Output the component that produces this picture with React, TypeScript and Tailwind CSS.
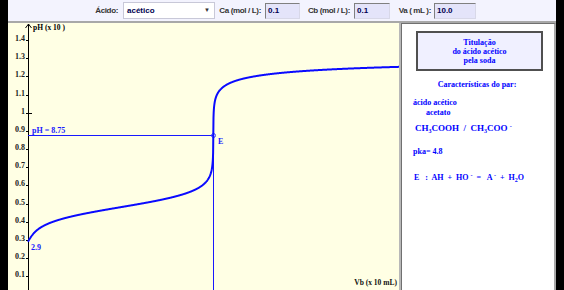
import React from "react";

// paramètres du titrage
const Ca = 0.1;
const Cb = 0.1;
const Va = 10;
const Ka = Math.pow(10, -4.8);
const Kw = 1e-14;

const phOf = (vb: number): number => {
  const V = Va + vb;
  const Ct = (Ca * Va) / V;
  const Na = (Cb * vb) / V;
  let lo = 0;
  let hi = 14;
  for (let i = 0; i < 60; i++) {
    const mid = (lo + hi) / 2;
    const h = Math.pow(10, -mid);
    const f = h + Na - Kw / h - (Ct * Ka) / (Ka + h);
    if (f > 0) lo = mid;
    else hi = mid;
  }
  return (lo + hi) / 2;
};

// coordonnées de la page
const X0 = 28;
const sx = (vb: number) => X0 + vb * 18.53;
const sy = (v: number) => 294.4 - 181.7 * v;

const buildCurve = () => {
  const pts: string[] = [];
  for (let vb = 0; vb <= 20.4; vb += 0.01) {
    pts.push(`${sx(vb).toFixed(2)},${sy(phOf(vb) / 10).toFixed(2)}`);
  }
  return pts.join(" ");
};

const ticks = [0.1, 0.2, 0.3, 0.4, 0.5, 0.6, 0.7, 0.8, 0.9, 1, 1.1, 1.2, 1.3, 1.4];

const Chart = () => {
  const curve = buildCurve();
  const yE = sy(0.875);
  const xE = sx(10);
  return (
    <div className="w-[391px] h-[267px] bg-[#ffffe4] overflow-hidden">
      <svg width={391} height={267} className="block">
        <g transform="translate(-8,-23)" fontFamily="'Liberation Serif', serif" fontWeight="bold">
          {/* axe vertical */}
          <line x1={28.5} y1={24} x2={28.5} y2={290} stroke="#000" strokeWidth={1} />
          <polyline points="25.5,28 28.5,24 31.5,28" fill="none" stroke="#000" strokeWidth={1} />
          <text x={33} y={30} fontSize={7.5} fill="#000">pH (x 10 )</text>
          {ticks.map((t) => {
            const y = Math.round(sy(t)) + 0.5;
            return (
              <g key={t}>
                <line x1={26} y1={y} x2={t === 1 ? 32 : 28} y2={y} stroke="#000" strokeWidth={1} />
                <text x={25} y={y} fontSize={8} textAnchor="end" fill="#222">
                  {t === 1 ? "1" : t.toFixed(1)}
                </text>
              </g>
            );
          })}

          {/* point d'équivalence */}
          <line x1={28} y1={Math.round(yE) + 0.5} x2={xE} y2={Math.round(yE) + 0.5} stroke="#1818ff" strokeWidth={1} />
          <line x1={Math.round(xE) + 0.5} y1={yE} x2={Math.round(xE) + 0.5} y2={291} stroke="#1818ff" strokeWidth={1} />
          <text x={32} y={133} fontSize={8} fill="#1818ff">pH = 8.75</text>
          <circle cx={Math.round(xE) + 0.5} cy={Math.round(yE) + 0.5} r={2} fill="none" stroke="#4040ff" strokeWidth={1} />
          <text x={218} y={144} fontSize={8} fill="#1818ff">E</text>

          {/* courbe */}
          <polyline points={curve} fill="none" stroke="#0a0aff" strokeWidth={2} />
          <text x={31} y={250} fontSize={8} fill="#1818ff">2.9</text>

          <text x={397} y={285} fontSize={7.5} textAnchor="end" fill="#111">Vb (x 10 mL)</text>
        </g>
      </svg>
    </div>
  );
};

const Field = ({ value, w }: { value: string; w: string }) => (
  <div
    className={`${w} h-[16px] bg-[#e4e4fa] border border-t-[#808080] border-l-[#808080] border-r-[#d8d8e8] border-b-[#d8d8e8] pl-[2px] text-[8px] leading-[13px] font-bold text-[#000050]`}
  >
    {value}
  </div>
);

const Label = ({ text, w }: { text: string; w: string }) => (
  <div className={`${w} flex justify-end whitespace-nowrap tracking-[-0.35px]`}>{text}</div>
);

const Sidebar = () => (
  <div
    className="w-[155px] h-[267px] bg-white border-t border-l border-t-[#707070] border-l-[#707070] border-r-2 border-r-[#a8a8a8] text-[#0000ff] font-bold"
    style={{ fontFamily: "'Liberation Serif', serif" }}
  >
    <div className="ml-[14px] mt-[7px] w-[127px] h-[40px] bg-[#f0f0ff] border-2 border-[#505050] flex flex-col items-center justify-center text-[8px] leading-[9px]">
      <span>Titulação</span>
      <span>do ácido acético</span>
      <span>pela soda</span>
    </div>
    <div className="mt-[9px] text-center text-[8px] leading-[10px] pr-[2px]">Características do par:</div>
    <div className="mt-[8px] ml-[11px] text-[8px] leading-[10px]">ácido acético</div>
    <div className="ml-[24px] text-[8px] leading-[10px]">acetato</div>
    <div className="mt-[5px] ml-[13px] text-[9px] leading-[10px] whitespace-pre">
      CH<sub className="text-[6px]">3</sub>COOH{"  /  "}CH<sub className="text-[6px]">3</sub>COO <sup className="text-[6px]">-</sup>
    </div>
    <div className="mt-[14px] ml-[11px] text-[8px] leading-[10px]">pka= 4.8</div>
    <div className="mt-[16px] ml-[12px] text-[8px] leading-[10px] whitespace-pre">
      {"E   :  AH  +  HO "}
      <sup className="text-[6px]">-</sup>
      {"  =   A "}
      <sup className="text-[6px]">-</sup>
      {"  +  H"}
      <sub className="text-[6px]">2</sub>O
    </div>
  </div>
);

export default function App() {
  return (
    <div className="w-[564px] h-[290px] bg-black pl-[8px] overflow-hidden">
      <div
        className="w-[548px] h-[21px] bg-[#f3f3fe] flex items-center text-[8px] font-bold text-[#333]"
        style={{ fontFamily: "'Liberation Sans', Arial, sans-serif" }}
      >
        <Label text="Ácido:" w="ml-[52px] w-[58px]" />
        <div className="ml-[5px] w-[92px] h-[17px] bg-white border border-[#c8c8d8] flex items-center pl-[3px] pr-[4px] text-[#000050]">
          <span className="flex-1">acético</span>
          <span className="text-[6px] text-[#333]">▼</span>
        </div>
        <Label text="Ca (mol / L):" w="w-[46px]" />
        <div className="ml-[4px]">
          <Field value="0.1" w="w-[35px]" />
        </div>
        <Label text="Cb (mol / L):" w="w-[50px]" />
        <div className="ml-[4px]">
          <Field value="0.1" w="w-[36px]" />
        </div>
        <Label text="Va ( mL ):" w="w-[41px]" />
        <div className="ml-[3px]">
          <Field value="10.0" w="w-[42px]" />
        </div>
      </div>
      <div className="w-[548px] h-[2px] bg-[#a8a8a8]" />
      <div className="flex">
        <Chart />
        <div className="w-[2px] h-[267px] bg-[#b8b8b8]" />
        <Sidebar />
      </div>
    </div>
  );
}
